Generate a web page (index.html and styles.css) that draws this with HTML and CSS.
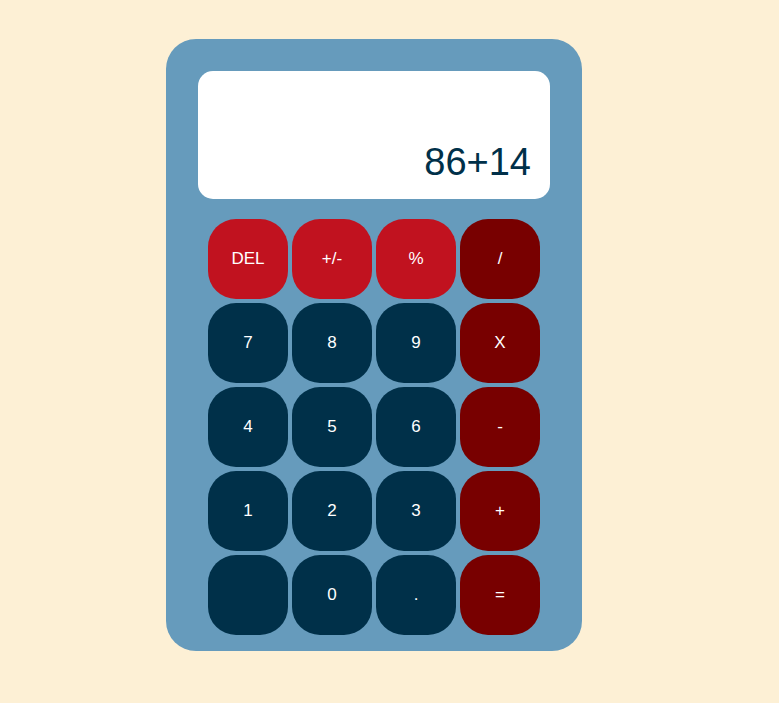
FILE: index.html
```html
<!DOCTYPE html>
<html>
<head>
<meta charset="utf-8">
<link rel="stylesheet" href="styles.css">
</head>
<body>
<div class="calculator">
  <div class="display"><span class="value">86+14</span></div>
  <div class="keys">
    <button class="key key-fn">DEL</button>
    <button class="key key-fn">+/-</button>
    <button class="key key-fn">%</button>
    <button class="key key-op">/</button>
    <button class="key">7</button>
    <button class="key">8</button>
    <button class="key">9</button>
    <button class="key key-op">X</button>
    <button class="key">4</button>
    <button class="key">5</button>
    <button class="key">6</button>
    <button class="key key-op">-</button>
    <button class="key">1</button>
    <button class="key">2</button>
    <button class="key">3</button>
    <button class="key key-op">+</button>
    <button class="key"></button>
    <button class="key">0</button>
    <button class="key">.</button>
    <button class="key key-op">=</button>
  </div>
</div>
</body>
</html>
```
FILE: styles.css
```css
html, body {
  margin: 0;
  padding: 0;
}
body {
  background: #FDF0D5;
  font-family: "Liberation Sans", Arial, sans-serif;
  min-height: 703px;
}
.calculator {
  box-sizing: border-box;
  width: 416px;
  height: 612px;
  margin: 39px 0 0 166px;
  padding: 32px 32px 16px;
  background: #669BBC;
  border-radius: 30px;
  display: flex;
  flex-direction: column;
}
.display {
  box-sizing: border-box;
  height: 128px;
  background: #ffffff;
  border-radius: 15px;
  display: flex;
  justify-content: flex-end;
  align-items: flex-end;
  padding: 0 19px 15px;
}
.value {
  font-size: 38px;
  color: #003049;
  line-height: normal;
}
.keys {
  margin-top: 20px;
  display: grid;
  grid-template-columns: repeat(4, 80px);
  grid-auto-rows: 80px;
  gap: 4px;
  justify-content: center;
}
.key {
  border: none;
  border-radius: 28px;
  background: #003049;
  color: #ffffff;
  font-family: "Liberation Sans", Arial, sans-serif;
  font-size: 17px;
  padding: 0;
  display: flex;
  align-items: center;
  justify-content: center;
}
.key-fn {
  background: #C1121F;
}
.key-op {
  background: #780000;
}
```
